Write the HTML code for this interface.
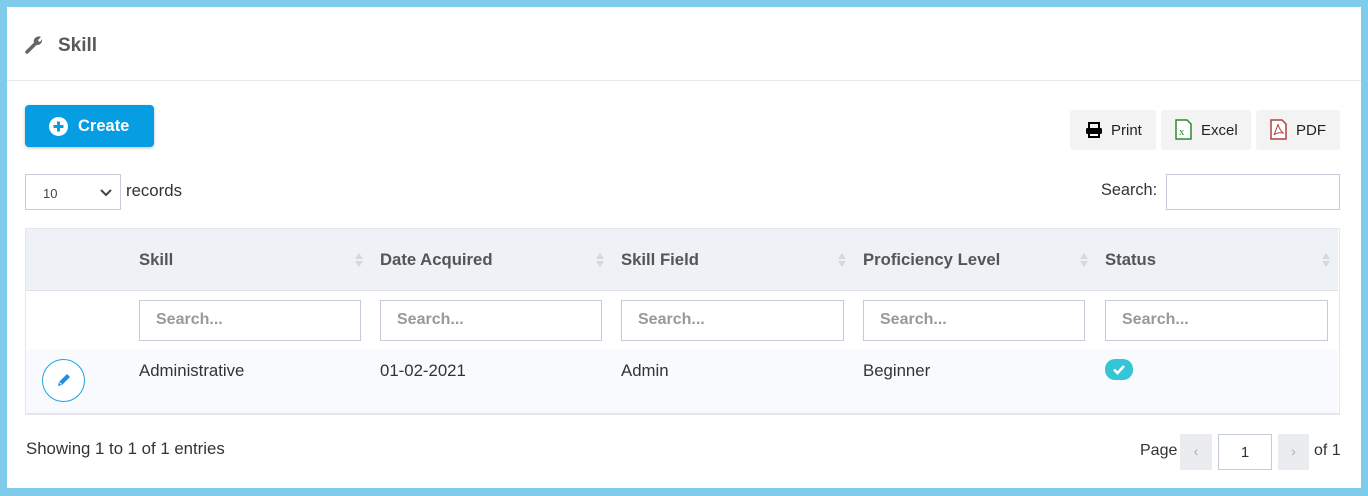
<!DOCTYPE html>
<html><head><style>
*{box-sizing:border-box;margin:0;padding:0}
body{width:1368px;height:496px;background:#7ecbeb;font-family:"Liberation Sans",sans-serif;position:relative;overflow:hidden}
.card{position:absolute;left:7px;top:7px;width:1354px;height:481px;background:#fff}
.a{position:absolute}
.hdr{left:0;top:0;width:1354px;height:74px;border-bottom:1px solid #e8eaee}
.title{left:51px;top:28px;font-size:19px;font-weight:bold;color:#595959}
.create{left:18px;top:98px;width:129px;height:42px;background:#069de2;border-radius:4px;box-shadow:0 1px 3px rgba(0,0,0,.25);color:#fff;font-weight:bold;font-size:16.5px}
.btn{top:103px;height:40px;background:#f3f3f3;border-radius:3px;font-size:15px;color:#222}
.sel{left:18px;top:167px;width:96px;height:36px;border:1px solid #c5ccd8}
.inp{border:1px solid #c5ccd8;background:#fff;height:41px;width:222px;top:293px;font-size:16px;font-weight:bold;color:#999;padding:10px 0 0 16px}
.th{top:243px;font-size:16.7px;font-weight:bold;color:#555}
.td{top:354px;font-size:16.8px;color:#333}
.sort{top:243px;width:8px;height:20px}
</style></head><body>
<div class="card">
<div class="a hdr"></div>
<svg class="a" style="left:17px;top:28px" width="20" height="20" viewBox="0 0 20 20"><path d="M3 17 L11 9" stroke="#666" stroke-width="3.5" stroke-linecap="round"/><path d="M10 8 A5 5 0 0 1 17 2 L14 5 L15 7 L17 6 L18 4 A5 5 0 0 1 12 10 Z" fill="#666"/></svg>
<div class="a title">Skill</div>
<div class="a create"><svg class="a" style="left:24px;top:12px" width="19" height="19" viewBox="0 0 19 19"><circle cx="9.5" cy="9.5" r="9.5" fill="#fff"/><path d="M9.5 4.5v10M4.5 9.5h10" stroke="#069de2" stroke-width="3"/></svg><span class="a" style="left:53px;top:12px">Create</span></div>
<div class="a btn" style="left:1063px;width:86px"><svg class="a" style="left:15px;top:12px" width="18" height="16" viewBox="0 0 18 16"><rect x="4" y="1" width="10" height="6" fill="none" stroke="#000" stroke-width="2"/><rect x="1" y="6" width="16" height="6" rx="1.5" fill="#000"/><rect x="4" y="11" width="10" height="4" fill="#fff" stroke="#000" stroke-width="2"/></svg><span class="a" style="left:41px;top:12px">Print</span></div>
<div class="a btn" style="left:1154px;width:90px"><svg class="a" style="left:14px;top:9px" width="17" height="21" viewBox="0 0 17 21"><path d="M1 1h11l4 4v15H1z" fill="#fff" stroke="#2c8a2c" stroke-width="1.5"/><text x="4" y="16" font-size="11" fill="#2c8a2c" font-family="Liberation Serif">x</text></svg><span class="a" style="left:40px;top:12px">Excel</span></div>
<div class="a btn" style="left:1249px;width:84px"><svg class="a" style="left:14px;top:9px" width="17" height="21" viewBox="0 0 17 21"><path d="M1 1h11l4 4v15H1z" fill="#fff" stroke="#b04040" stroke-width="1.5"/><path d="M4 16 Q8 6 8 5 Q9 10 13 14 Q7 13 4 16" fill="none" stroke="#b04040" stroke-width="1"/></svg><span class="a" style="left:40px;top:12px">PDF</span></div>
<div class="a sel"><span class="a" style="left:17px;top:11px;font-size:13px;color:#444">10</span><svg class="a" style="left:74px;top:14px" width="12" height="8" viewBox="0 0 12 8"><path d="M1 1l5 5 5-5" fill="none" stroke="#444" stroke-width="2"/></svg></div>
<div class="a" style="left:119px;top:174px;font-size:16.8px;color:#333">records</div>
<div class="a" style="left:1094px;top:174px;font-size:16.3px;color:#333">Search:</div>
<div class="a" style="left:1159px;top:167px;width:174px;height:36px;border:1px solid #c5ccd8"></div>
<div class="a" style="left:18px;top:221px;width:1315px;height:187px;border:1px solid #e3e6ea;border-bottom:2px solid #e3e6ea"></div>
<div class="a" style="left:19px;top:222px;width:1312px;height:62px;background:#eef1f5;border-bottom:1px solid #e0e4ea"></div>
<div class="a" style="left:19px;top:343px;width:1312px;height:63px;background:#f8fafd"></div>
<div class="a th" style="left:132px">Skill</div>
<div class="a th" style="left:373px">Date Acquired</div>
<div class="a th" style="left:614px">Skill Field</div>
<div class="a th" style="left:856px">Proficiency Level</div>
<div class="a th" style="left:1098px">Status</div>
<svg class="a sort" style="left:348px" viewBox="0 0 8 20"><path d="M0 9L4 3 8 9z" fill="#d5d8dc"/><path d="M0 11L4 17 8 11z" fill="#d5d8dc"/></svg>
<svg class="a sort" style="left:589px" viewBox="0 0 8 20"><path d="M0 9L4 3 8 9z" fill="#d5d8dc"/><path d="M0 11L4 17 8 11z" fill="#d5d8dc"/></svg>
<svg class="a sort" style="left:831px" viewBox="0 0 8 20"><path d="M0 9L4 3 8 9z" fill="#d5d8dc"/><path d="M0 11L4 17 8 11z" fill="#d5d8dc"/></svg>
<svg class="a sort" style="left:1073px" viewBox="0 0 8 20"><path d="M0 9L4 3 8 9z" fill="#d5d8dc"/><path d="M0 11L4 17 8 11z" fill="#d5d8dc"/></svg>
<svg class="a sort" style="left:1315px" viewBox="0 0 8 20"><path d="M0 9L4 3 8 9z" fill="#d5d8dc"/><path d="M0 11L4 17 8 11z" fill="#d5d8dc"/></svg>
<div class="a inp" style="left:132px">Search...</div>
<div class="a inp" style="left:373px">Search...</div>
<div class="a inp" style="left:614px;width:223px">Search...</div>
<div class="a inp" style="left:856px">Search...</div>
<div class="a inp" style="left:1098px;width:223px">Search...</div>
<div class="a" style="left:35px;top:352px;width:43px;height:43px;border:1px solid #1fa3e6;border-radius:50%;background:#fff"><svg class="a" style="left:13px;top:12px" width="16" height="16" viewBox="0 0 16 16"><path d="M2 14l1-4 8-8 3 3-8 8z" fill="#1f8fe0"/><path d="M3.5 10.5l2 2" stroke="#fff" stroke-width="1"/></svg></div>
<div class="a td" style="left:132px">Administrative</div>
<div class="a td" style="left:373px">01-02-2021</div>
<div class="a td" style="left:614px">Admin</div>
<div class="a td" style="left:856px">Beginner</div>
<div class="a" style="left:1098px;top:352px;width:28px;height:21px;border-radius:10px;background:#35c6d6"><svg class="a" style="left:7px;top:5px" width="14" height="11" viewBox="0 0 14 11"><path d="M2 5.5l3.5 3.5 6.5-7" fill="none" stroke="#fff" stroke-width="2.6"/></svg></div>
<div class="a" style="left:19px;top:432px;font-size:16.8px;color:#333">Showing 1 to 1 of 1 entries</div>
<div class="a" style="left:1133px;top:435px;font-size:16px;color:#333">Page</div>
<div class="a" style="left:1173px;top:427px;width:32px;height:36px;background:#ebecef;color:#aaa;text-align:center;line-height:34px;font-size:14px">‹</div>
<div class="a" style="left:1211px;top:427px;width:54px;height:36px;border:1px solid #c5ccd8;text-align:center;line-height:36px;font-size:15px;color:#333">1</div>
<div class="a" style="left:1271px;top:427px;width:31px;height:36px;background:#ebecef;color:#aaa;text-align:center;line-height:34px;font-size:14px">›</div>
<div class="a" style="left:1307px;top:435px;font-size:16px;color:#333">of 1</div>
</div>
</body></html>
